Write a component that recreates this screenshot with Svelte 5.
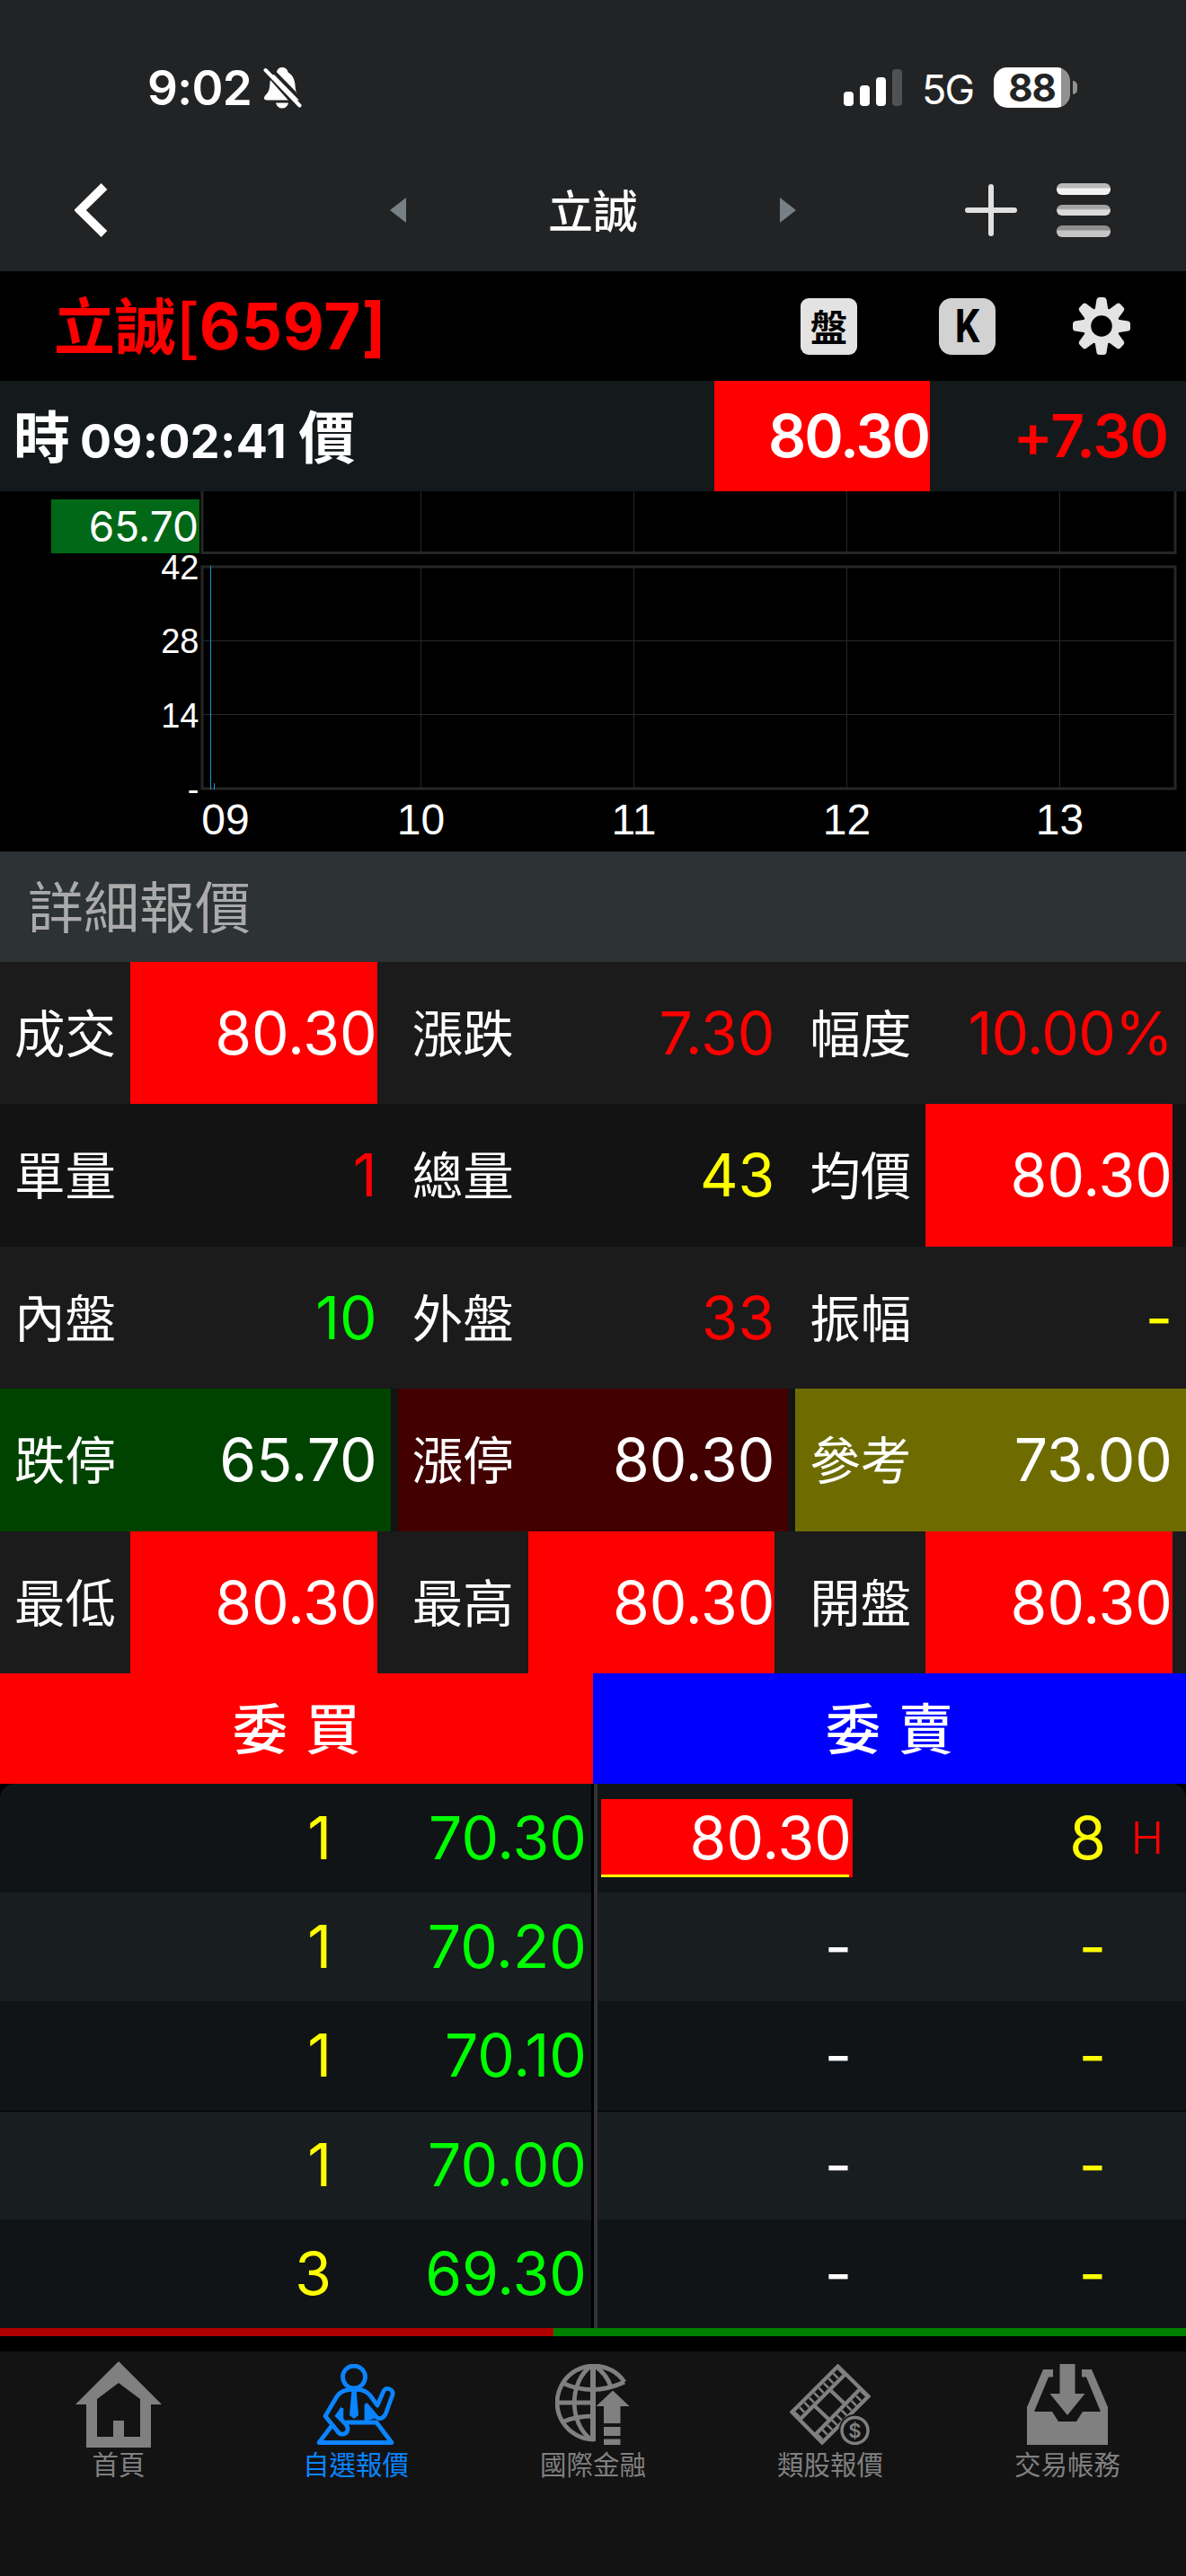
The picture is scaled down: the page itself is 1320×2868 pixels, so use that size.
<script>
	const hours = [
		{ label: '10', x: 468.5 },
		{ label: '11', x: 705.5 },
		{ label: '12', x: 942.5 },
		{ label: '13', x: 1179.5 }
	];

	const volumes = [
		{ label: '42', y: 645 },
		{ label: '28', y: 727 },
		{ label: '14', y: 810 },
		{ label: '-', y: 892 }
	];

	// color: text color, box: red block behind the value, fill: whole cell
	const quotes = [
		[
			{ name: '成交', value: '80.30', box: true },
			{ name: '漲跌', value: '7.30', color: 'red' },
			{ name: '幅度', value: '10.00%', color: 'red tight' }
		],
		[
			{ name: '單量', value: '1', color: 'red' },
			{ name: '總量', value: '43', color: 'yellow' },
			{ name: '均價', value: '80.30', box: true }
		],
		[
			{ name: '內盤', value: '10', color: 'lime' },
			{ name: '外盤', value: '33', color: 'red' },
			{ name: '振幅', value: '-', color: 'yellow' }
		],
		[
			{ name: '跌停', value: '65.70', fill: 'down' },
			{ name: '漲停', value: '80.30', fill: 'up' },
			{ name: '參考', value: '73.00', fill: 'ref' }
		],
		[
			{ name: '最低', value: '80.30', box: true },
			{ name: '最高', value: '80.30', box: true },
			{ name: '開盤', value: '80.30', box: true }
		]
	];

	const bids = [
		{ qty: '1', price: '70.30' },
		{ qty: '1', price: '70.20' },
		{ qty: '1', price: '70.10' },
		{ qty: '1', price: '70.00' },
		{ qty: '3', price: '69.30' }
	];

	const asks = [
		{ price: '80.30', qty: '8', limit: true },
		{ price: '-', qty: '-' },
		{ price: '-', qty: '-' },
		{ price: '-', qty: '-' },
		{ price: '-', qty: '-' }
	];

	const buyRatio = 46.67;

	const tabs = [
		{ icon: 'home', label: '首頁' },
		{ icon: 'watch', label: '自選報價', active: true },
		{ icon: 'globe', label: '國際金融' },
		{ icon: 'film', label: '類股報價' },
		{ icon: 'inbox', label: '交易帳務' }
	];
</script>

<div class="app">
	<header>
		<div class="status">
			<div class="clock">
				<span>9:02</span>
				<svg width="44" height="47" viewBox="0 0 44 47">
					<path
						d="M21 0c4 0 6 2.500 6.600 5.500C33 8.500 35 14 35.500 20c.3 6 1.500 9 4.500 11.500 3.500 3 2 5-1 5H4c-3.500 0-4-3-1.500-5.500C5.500 28 7 25 7.300 19c.4-7 2.700-11 7.500-13.500C15.500 2 17.500 0 21 0z"
						fill="#fff"
					/>
					<path d="M14 39.500h14c-1 4-3.500 6-7 6s-6-2-7-6z" fill="#fff" />
					<path d="M5.500-1.500L46 40" stroke="#222325" stroke-width="4" />
					<path d="M-1 1L37 44" stroke="#222325" stroke-width="4" />
					<path d="M2.500 3L40.500 42.500" stroke="#fff" stroke-width="4" stroke-linecap="round" />
				</svg>
			</div>
			<div class="network">
				<div class="signal">
					<i style="height:16px"></i>
					<i style="height:23px"></i>
					<i style="height:32px"></i>
					<i class="off" style="height:41px"></i>
				</div>
				<span class="carrier">5G</span>
				<div class="battery"><span>88</span></div>
				<i class="nub"></i>
			</div>
		</div>
		<nav>
			<svg class="back" width="37" height="60" viewBox="0 0 37 60">
				<path d="M33 3.500L6 30l27 26.500" fill="none" stroke="#fff" stroke-width="9.500" />
			</svg>
			<svg class="prev" width="18" height="28" viewBox="0 0 18 28">
				<path d="M18 0v28L0 14z" fill="#778085" />
			</svg>
			<h1>立誠</h1>
			<svg class="next" width="18" height="28" viewBox="0 0 18 28">
				<path d="M0 0v28l18-14z" fill="#778085" />
			</svg>
			<svg class="plus" width="58" height="58" viewBox="0 0 58 58">
				<path d="M29 3v52M3 29h52" stroke="#e0e0e0" stroke-width="6" stroke-linecap="round" />
			</svg>
			<div class="menu"><i></i><i></i><i></i></div>
		</nav>
	</header>

	<section class="title">
		<h2>立誠[<span>6597]</span></h2>
		<div class="tools">
			<button class="pan">盤</button>
			<button class="kline"><span>K</span></button>
			<svg width="64" height="64" viewBox="-32 -32 64 64">
				<g fill="#e3e3e3">
					<circle r="20.500" />
					{#each [0, 45, 90, 135, 180, 225, 270, 315] as angle}
						<path
							d="M-7.500-17L-5.500-29.500Q-5-32-2.500-32H2.500Q5-32 5.500-29.500L7.500-17z"
							transform="rotate({angle})"
						/>
					{/each}
				</g>
				<circle r="11.800" fill="#000" />
			</svg>
		</div>
	</section>

	<section class="tick">
		<p>時<span>09:02:41</span>價</p>
		<b class="last">80.30</b>
		<b class="change">+7.30</b>
	</section>

	<svg class="chart" width="1320" height="401" viewBox="0 547 1320 401">
		<g stroke="#282828" stroke-width="1">
			{#each hours as hour}
				<path d="M{hour.x} 547V616M{hour.x} 630V879" />
			{/each}
			<path d="M225 713.500H1309M225 795.500H1309" />
		</g>
		<path d="M225 540V615.500H1308V540" fill="none" stroke="#262626" stroke-width="3" />
		<rect x="225" y="631" width="1083" height="247" fill="none" stroke="#262626" stroke-width="3" />
		<path d="M234.500 630V879M238.500 872V879" stroke="#1a95c8" />
		<rect x="57" y="556" width="165" height="60" fill="#006817" />
		<text class="low" x="221" y="603">65.70</text>
		{#each volumes as v}
			<text class="vol" x="221.500" y={v.y}>{v.label}</text>
		{/each}
		<text class="hour" x="251" y="929">09</text>
		{#each hours as hour}
			<text class="hour" x={hour.x} y="929">{hour.label}</text>
		{/each}
	</svg>

	<h3>詳細報價</h3>

	<section class="quotes">
		{#each quotes as row}
			<div class="row">
				{#each row as cell}
					<div class="cell {cell.fill ?? ''}">
						<span class="name">{cell.name}</span>
						<span class="value {cell.color ?? ''}" class:box={cell.box}>{cell.value}</span>
					</div>
				{/each}
			</div>
		{/each}
	</section>

	<section class="book">
		<div class="side bid">
			<h4>委 買</h4>
			<div class="levels">
				{#each bids as bid}
					<div class="level">
						<span class="qty">{bid.qty}</span>
						<span class="price">{bid.price}</span>
					</div>
				{/each}
			</div>
		</div>
		<div class="side ask">
			<h4>委 賣</h4>
			<div class="levels">
				{#each asks as ask}
					<div class="level">
						<span class="price" class:limit={ask.limit}>{ask.price}</span>
						<span class="qty">{ask.qty}</span>
						<span class="flag">{ask.limit ? 'H' : ''}</span>
					</div>
				{/each}
			</div>
		</div>
	</section>

	<div class="ratio"><i style="width:{buyRatio}%"></i></div>

	<footer>
		{#each tabs as tab}
			<div class="tab" class:active={tab.active}>
				<div class="icon">
					{#if tab.icon === 'home'}
						<svg width="96" height="96" viewBox="0 0 96 96">
							<path
								d="M48 0L96 48H84V96H12V48H0zM48 24L24 42V84H42V66H54V84H72V42z"
								fill="currentColor"
								fill-rule="evenodd"
							/>
						</svg>
					{:else if tab.icon === 'watch'}
						<svg width="88" height="90" viewBox="0 0 88 90">
							<g fill="none" stroke="currentColor" stroke-width="4.800" stroke-linejoin="round">
								<circle cx="42" cy="14.500" r="12.500" />
								<path
									d="M42 28.500C34 28 27 30 23 36L10 58 23 74C27 81 36 78 35 71.500 34.500 68 32 66 30 64L22 56"
								/>
								<path
									d="M42 28.500C50 28 56 30 60 35L68 46 75 30C78 25 86 28 85 34L77 56C74 61 70 62 67 59L56 46V64"
								/>
								<path d="M28.500 49V63" stroke-width="3.500" />
								<path d="M33 65H67L84 87.500H3L17 69" />
							</g>
							<path d="M22 56l6-9v15zM57 46l10 14-10 3z" fill="currentColor" />
							<path d="M39.500 28h5l2.500 29-5 4-5-4z" fill="currentColor" />
						</svg>
					{:else if tab.icon === 'globe'}
						<svg width="84" height="90" viewBox="0 0 84 90">
							<g fill="none" stroke="currentColor" stroke-width="4.800">
								<path d="M77 20A41 41 0 1 0 43 84" />
								<path d="M42 1V86" stroke-width="6" />
								<path d="M3 43H42M10 22Q43 36 77 20M9 64Q24 58 42 58" />
								<path d="M40 2C15 20 15 66 40 84M44 2Q58 12 62 26" />
							</g>
							<path
								d="M64 29.500L82.500 47H72.500V66H54V47H45.500zM54 70H72.500V80H54zM54 83.500H72.500V90H54z"
								fill="currentColor"
							/>
						</svg>
					{:else if tab.icon === 'film'}
						<svg width="90" height="90" viewBox="0 0 90 90">
							<g fill="none" stroke="currentColor" stroke-width="4.200">
								<path d="M53.500 2.500L87.500 36 36 87.500 2.500 53.500z" />
								<path d="M62 11L11 62M79 27L28 79M44 28L63 46M26 45L46 64" />
								<path d="M57.500 7L7 57.500M83 32L32 83" stroke-width="7.500" stroke-dasharray="2.600 5" />
							</g>
							<circle cx="72.500" cy="74" r="18" fill="#131313" />
							<circle cx="72.500" cy="74" r="14.500" fill="none" stroke="currentColor" stroke-width="3.500" />
							<text class="coin" x="72.500" y="82">$</text>
						</svg>
					{:else}
						<svg width="90" height="90" viewBox="0 0 90 90">
							<path
								d="M0 48L18 6H29V14.500H24L8 53H28L35 64H55L62 53H82L66 14.500H61V6H72L90 48V90H0z"
								fill="currentColor"
							/>
							<path d="M36.500 0H53.500V33H64.500L45 57 25.500 33H36.500z" fill="currentColor" />
						</svg>
					{/if}
				</div>
				<span>{tab.label}</span>
			</div>
		{/each}
	</footer>
</div>

<style>
	:global(body) {
		background: #000;
	}
	.app {
		width: 1320px;
		height: 2868px;
		display: flex;
		flex-direction: column;
		overflow: hidden;
		background: #000;
		color: #fff;
		font-family: Inter, 'Noto Sans CJK TC', sans-serif;
	}
	h1,
	h2,
	h3,
	h4,
	p {
		margin: 0;
	}
	svg {
		display: block;
		flex: none;
	}
	header {
		height: 302px;
		background: #222325;
	}
	.status {
		height: 166px;
		display: flex;
		justify-content: space-between;
		padding: 32px 121px 0 164px;
		box-sizing: border-box;
	}
	.clock,
	.network {
		display: flex;
		align-items: center;
		height: 132px;
	}
	.clock {
		gap: 13px;
		font-size: 53px;
		font-weight: 600;
		letter-spacing: -0.700px;
	}
	.network {
		height: 130px;
	}
	.signal {
		display: flex;
		align-items: flex-end;
		gap: 7px;
	}
	.signal i {
		width: 11px;
		border-radius: 4px;
		background: #fff;
	}
	.signal i.off {
		background: #505153;
	}
	.carrier {
		margin: 4px 23px 0 22px;
		font-size: 45px;
		letter-spacing: -2px;
	}
	.battery {
		width: 85px;
		height: 45px;
		line-height: 45px;
		border-radius: 15px;
		background: linear-gradient(to right, #fff 75px, #919192 75px);
		color: #222325;
		font-size: 42px;
		font-weight: 700;
		text-align: center;
		letter-spacing: -1px;
	}
	.nub {
		width: 5px;
		height: 15px;
		margin-left: 3px;
		border-radius: 0 5px 5px 0;
		background: #919192;
	}
	nav {
		height: 136px;
		display: flex;
		align-items: center;
		padding: 0 84px 0 83px;
	}
	h1 {
		width: 416px;
		height: 136px;
		text-align: center;
		font-size: 50px;
		font-weight: 500;
		line-height: 140px;
	}
	.prev {
		margin-left: 314px;
	}
	.plus {
		margin-left: 188px;
	}
	.menu {
		width: 60px;
		margin-left: 44px;
		display: flex;
		flex-direction: column;
		gap: 11px;
	}
	.menu i {
		height: 12.500px;
		border-radius: 6px;
		background: linear-gradient(#b9b9b9 35%, #f2f2f2 50%);
	}
	.menu i:nth-child(2) {
		background: linear-gradient(#a3a3a3 35%, #dadada 50%);
	}
	.menu i:nth-child(3) {
		background: linear-gradient(#8f8f8f 35%, #c4c4c4 50%);
	}

	.title {
		height: 122px;
		display: flex;
		align-items: center;
		justify-content: space-between;
		padding: 0 62px 0 60px;
	}
	h2 {
		height: 122px;
		color: #f00;
		font: 700 68px/115px 'Noto Sans CJK TC', sans-serif;
	}
	h2 span {
		font-family: Inter, sans-serif;
		font-size: 71px;
		letter-spacing: 0.800px;
	}
	.tools {
		display: flex;
		align-items: center;
	}
	.tools button {
		width: 63px;
		height: 63px;
		margin-right: 91px;
		padding: 0;
		border: none;
		border-radius: 9px;
		background: #e3e3e3;
		color: #000;
		font: 700 41px/63px 'Noto Sans CJK TC', sans-serif;
	}
	.tools .pan {
		padding-bottom: 3px;
		line-height: 60px;
	}
	.tools .kline {
		margin-right: 86px;
		border-radius: 14px;
		background: #d2d2d2;
		font: 700 51px/63px Roboto, sans-serif;
	}
	.kline span {
		display: block;
		transform: scaleX(0.85);
	}

	.tick {
		height: 123px;
		display: flex;
		line-height: 123px;
		background: #141a1c;
	}
	.tick p {
		width: 780px;
		height: 123px;
		padding-left: 15px;
		font-size: 63px;
		font-weight: 700;
		line-height: 126px;
	}
	.tick p span {
		margin: 0 13px 0 11px;
		font-size: 52px;
		letter-spacing: 0.400px;
	}
	.tick b {
		font-size: 66px;
		font-weight: 600;
		text-align: right;
	}
	.last {
		width: 239px;
		padding-right: 1px;
		background: #f00;
		letter-spacing: -2px;
	}
	.change {
		flex: 1;
		padding-right: 20px;
		color: #f00;
		letter-spacing: -1px;
	}

	.chart text {
		fill: #fff;
		font-family: 'Liberation Sans', sans-serif;
	}
	.chart .low {
		font-family: Inter, sans-serif;
		font-size: 46px;
		text-anchor: end;
	}
	.chart .vol {
		font-size: 38px;
		text-anchor: end;
	}
	.chart .hour {
		font-size: 48px;
		text-anchor: middle;
	}

	h3 {
		height: 123px;
		padding-left: 31px;
		line-height: 127px;
		font-size: 62px;
		font-weight: 400;
		background: #2d3235;
		color: #aaa;
	}

	.quotes {
		height: 792px;
		display: grid;
		grid-template-rows: repeat(5, minmax(0, 1fr));
	}
	.row {
		display: grid;
		grid-template-columns: repeat(3, 1fr);
		grid-template-rows: minmax(0, 1fr);
		column-gap: 8px;
		background: #1b1b1b;
	}
	.row:nth-child(even) {
		background: #131313;
	}
	.cell {
		display: flex;
		padding-right: 15px;
		line-height: 158px;
	}
	.name {
		width: 129px;
		padding-left: 16px;
		font-size: 56.500px;
		line-height: 161px;
	}
	.value {
		flex: 1;
		font-size: 66px;
		text-align: right;
	}
	.tight {
		letter-spacing: -0.800px;
	}
	.box {
		background: #f00;
	}
	.red {
		color: #f00;
	}
	.yellow {
		color: #ff0;
	}
	.lime {
		color: #0f0;
	}
	.down {
		background: #004300;
	}
	.up {
		background: #430000;
	}
	.ref {
		background: #6e6c00;
	}

	.book {
		display: flex;
	}
	.side {
		width: 660px;
	}
	h4 {
		height: 123px;
		line-height: 127px;
		font-size: 61px;
		font-weight: 500;
		text-align: center;
		word-spacing: 4px;
	}
	.bid h4 {
		background: #f00;
	}
	.ask h4 {
		background: #00f;
	}
	.levels {
		height: 606px;
		display: grid;
		grid-template-rows: repeat(5, 1fr);
		overflow: hidden;
	}
	.bid .levels {
		margin-right: 2px;
		border-radius: 16px 0 0 0;
	}
	.ask .levels {
		margin-left: 1px;
		border-left: 4px solid #333;
		border-radius: 0 16px 0 0;
	}
	.level {
		display: flex;
		align-items: center;
		background: #101416;
		font-size: 66px;
		line-height: 87px;
		text-align: right;
	}
	.level:nth-child(even) {
		background: #181d1f;
	}
	.level:nth-child(4) {
		border-top: 1px solid #000;
	}
	.qty {
		color: #ff0;
	}
	.bid .qty {
		width: 369px;
	}
	.bid .price {
		width: 284px;
		color: #0f0;
	}
	.ask .price {
		width: 279px;
		height: 87px;
		margin-left: 4px;
		padding-right: 1px;
	}
	.ask .limit {
		background: linear-gradient(#ff0, #ff0) 0 100% / 276px 3px no-repeat #f00;
	}
	.ask .qty {
		width: 282px;
	}
	.flag {
		width: 64px;
		color: #f00;
		font-size: 49px;
		font-weight: 350;
	}

	.ratio {
		height: 9px;
		display: flex;
		margin-bottom: 17px;
		background: #008000;
	}
	.ratio i {
		background: #b00000;
	}

	footer {
		flex: 1;
		display: flex;
		background: #131313;
	}
	.tab {
		flex: 1;
		display: flex;
		flex-direction: column;
		align-items: center;
		color: #808080;
		font-size: 29.500px;
		line-height: 36px;
	}
	.tab.active {
		color: #0a84ff;
	}
	.icon {
		height: 98px;
		padding-top: 10px;
		display: flex;
		align-items: center;
	}
	.coin {
		font: 600 22px Inter, sans-serif;
		fill: currentColor;
		text-anchor: middle;
	}
</style>
